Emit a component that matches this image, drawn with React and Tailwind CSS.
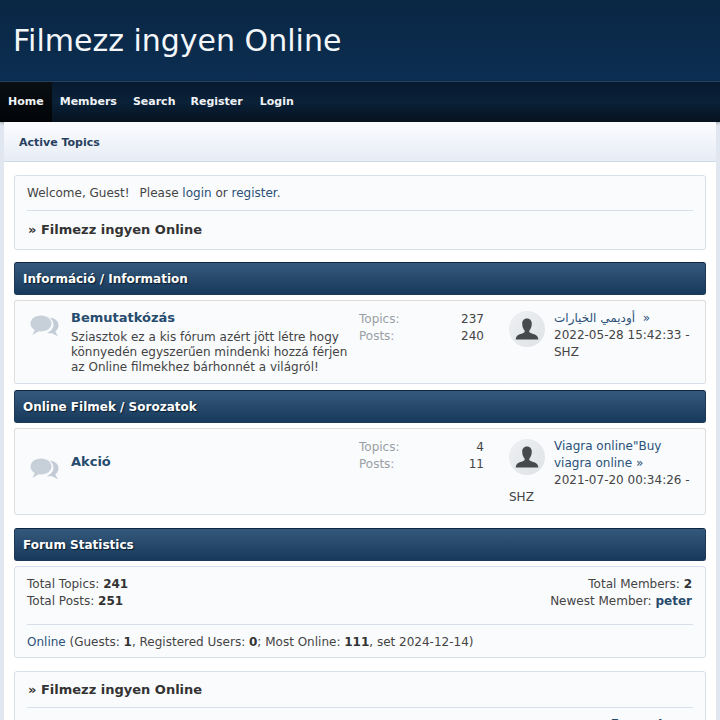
import React from 'react';

const CategoryBar = ({ title }) => (
  <div className="h-[33px] flex items-center px-2 rounded-[3px] border border-[#1b3a5a] border-t-[#10263e] bg-gradient-to-b from-[#35597c] to-[#173a5c] text-white font-bold text-xs [text-shadow:1px_1px_1px_#0a1c2e]">
    {title}
  </div>
);

const BubbleIcon = () => (
  <svg width="29" height="23" viewBox="0 0 29 23" className="block">
    <path fill="#c3ccd6" d="M19 2.500c5 .2 9.500 3.200 9.500 7.800 0 2.600-1.300 4.700-3.200 6.100l2.700 4.900-6.500-3.300c-1.500.3-3 .3-4.500 0 4-1.800 6.500-4.800 6.500-8.300 0-2.800-1.500-5.300-4-7.200z" />
    <path fill="#c7d0d9" d="M11 0.500c5.800 0 10.500 3.600 10.500 8s-4.700 8-10.500 8c-.8 0-1.600-.1-2.300-.2L2.500 20l2.200-5C2.100 13.500.5 11.100.5 8.500c0-4.400 4.700-8 10.500-8z" />
  </svg>
);

const Avatar = () => (
  <div className="w-9 h-9 rounded-full bg-gradient-to-br from-[#eef0f2] to-[#dfe2e6] overflow-hidden shrink-0">
    <svg width="36" height="36" viewBox="0 0 36 36" className="block">
      <path fill="#474a4d" d="M18 7.500c3 0 4.800 2.200 4.800 5.200 0 2.800-1 5.200-2.200 6.600-.5.600-.4 1.800.1 2.300 1.300 1 6.400 1.900 7.700 3.900.5.800.8 1.700.9 2.900H6.700c.1-1.200.4-2.100.9-2.900 1.300-2 6.400-2.900 7.700-3.900.5-.5.600-1.700.1-2.300-1.200-1.400-2.200-3.800-2.200-6.600 0-3 1.800-5.200 4.800-5.200z" />
    </svg>
  </div>
);

const Counts = ({ topics, posts }) => (
  <div className="w-[125px] shrink-0 pt-2.5 text-xs leading-[17px]">
    <div className="flex justify-between">
      <span className="text-[#9a9fa5]">Topics:</span>
      <span className="text-[#444]">{topics}</span>
    </div>
    <div className="flex justify-between">
      <span className="text-[#9a9fa5]">Posts:</span>
      <span className="text-[#444]">{posts}</span>
    </div>
  </div>
);

const A = ({ children }) => <span className="text-[#2a5078]">{children}</span>;

export default function App() {
  return (
    <div className="w-[720px] h-[720px] overflow-hidden bg-[#e0e7f0] text-xs text-[#444] font-['DejaVu_Sans',sans-serif]">
      <header className="h-[81px] flex items-center px-[13px] pt-px bg-gradient-to-b from-[#0a2744] to-[#0c2e52]">
        <h1 className="text-[30px] leading-none text-[#f4f7fa] font-normal">Filmezz ingyen Online</h1>
      </header>
      <nav className="h-[41px] flex items-stretch border-t border-[#25415e] bg-gradient-to-b from-[#071a2e] via-[#0a2138] to-[#06121f] shadow-[0_1px_3px_rgba(0,0,0,0.35)] text-[11px] font-bold text-[#f0f3f6]">
        <span className="flex items-center pt-px px-2 bg-gradient-to-b from-[#0a0f14] to-[#020508]">Home</span>
        <span className="flex items-center pt-px ml-2">Members</span>
        <span className="flex items-center pt-px ml-4">Search</span>
        <span className="flex items-center pt-px ml-[15px]">Register</span>
        <span className="flex items-center pt-px ml-[17px]">Login</span>
      </nav>
      <main className="mx-1 bg-white h-[598px]">
        <div className="h-10 flex items-center px-[15px] pt-[3px] bg-gradient-to-b from-[#fbfcfe] to-[#e7ecf5] border-b border-[#cfdae8] text-[11px] font-bold text-[#27405f]">
          Active Topics
        </div>
        <div className="px-2.5 pt-[13px] flex flex-col">
          <section className="h-[75px] rounded-[3px] border border-[#d6dfea] bg-[#fafbfd] px-3 pt-[9px]">
            <div className="leading-[17px] pb-2 border-b border-[#d6dfea]">
              Welcome, Guest!<span className="ml-2.5">Please</span> <A>login</A> or <A>register</A>.
            </div>
            <div className="pt-2.5 pl-px text-[13px] font-bold text-[#333] leading-[17px]">» Filmezz ingyen Online</div>
          </section>

          <div className="mt-3"><CategoryBar title="Információ / Information" /></div>

          <section className="mt-[5px] h-[84px] rounded-[3px] border border-[#e0dcda] border-b-[#d6dfea] bg-[#f9fbfd] flex">
            <div className="w-[56px] shrink-0 pl-[15px] pt-3.5"><BubbleIcon /></div>
            <div className="w-[288px] shrink-0 pt-2">
              <div className="text-[13px] font-bold text-[#274b6d] leading-[17px]">Bemutatkózás</div>
              <p className="leading-[15px] mt-1">Sziasztok ez a kis fórum azért jött létre hogy könnyedén egyszerűen mindenki hozzá férjen az Online filmekhez bárhonnét a világról!</p>
            </div>
            <Counts topics="237" posts="240" />
            <div className="ml-[25px] pt-[9px] flex gap-[9px]">
              <div className="pt-px"><Avatar /></div>
              <div className="leading-[17px] w-[145px]">
                <A>أوديمي الخيارات</A> &nbsp;<A>»</A>
                <br />2022-05-28 15:42:33 - SHZ
              </div>
            </div>
          </section>

          <div className="mt-1.5"><CategoryBar title="Online Filmek / Sorozatok" /></div>

          <section className="mt-[5px] h-[87px] rounded-[3px] border border-[#e0dcda] border-b-[#d6dfea] bg-[#f9fbfd] flex">
            <div className="w-[56px] shrink-0 pl-[15px] pt-[29px]"><BubbleIcon /></div>
            <div className="w-[288px] shrink-0 pt-6">
              <div className="text-[13px] font-bold text-[#274b6d] leading-[17px]">Akció</div>
            </div>
            <Counts topics="4" posts="11" />
            <div className="ml-[25px] pt-[9px] w-[185px] leading-[17px]">
              <div className="float-left mt-px mr-[9px]"><Avatar /></div>
              <A>Viagra online"Buy viagra online »</A>
              <br />2021-07-20 00:34:26 - SHZ
            </div>
          </section>

          <div className="mt-[13px]"><CategoryBar title="Forum Statistics" /></div>

          <section className="mt-[5px] h-[92px] rounded-[3px] border border-[#d6dfea] bg-[#fafbfd] px-3 pt-[9px]">
            <div className="flex justify-between leading-[17px] pb-3.5 pr-px border-b border-[#d6dfea]">
              <div>
                <div>Total Topics: <b className="text-[#333]">241</b></div>
                <div>Total Posts: <b className="text-[#333]">251</b></div>
              </div>
              <div className="text-right">
                <div>Total Members: <b className="text-[#333]">2</b></div>
                <div>Newest Member: <b className="text-[#274b6d]">peter</b></div>
              </div>
            </div>
            <div className="pt-[9px] leading-[17px]">
              <A>Online</A> (Guests: <b className="text-[#333]">1</b>, Registered Users: <b className="text-[#333]">0</b>; Most Online: <b className="text-[#333]">111</b>, set 2024-12-14)
            </div>
          </section>

          <section className="mt-[13px] h-[80px] rounded-[3px] border border-[#d6dfea] bg-[#fafbfd] px-3 pt-[9px]">
            <div className="pb-[9px] pl-px border-b border-[#d6dfea] text-[13px] font-bold text-[#333] leading-[17px]">» Filmezz ingyen Online</div>
            <div className="pt-2 text-right font-bold text-[#274b6d] leading-[17px] pr-px">Forum Jump</div>
          </section>
        </div>
      </main>
    </div>
  );
}
